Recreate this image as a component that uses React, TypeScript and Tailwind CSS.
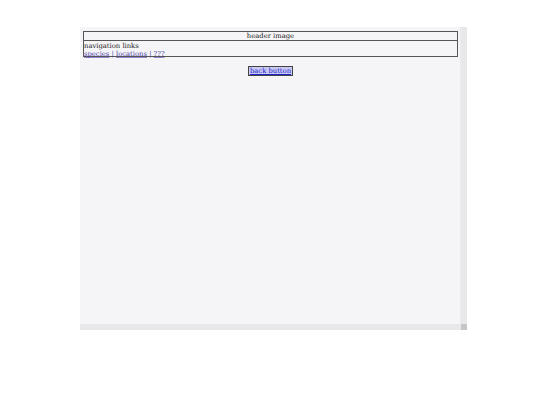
export default function App() {
  return (
    <div className="h-[405px] w-[540px] overflow-hidden bg-white pl-[80px] pt-[27px] font-['DejaVu_Serif',serif]">
      <div className="flex h-[303px] w-[387px] flex-col">
        <div className="flex min-h-0 flex-1">
          <div className="flex-1 bg-[#f5f4f6] px-[3px] pt-[4px] text-[6.8px] leading-[8px] text-[#1a1a1a]">
            <div className="flex h-[10px] items-center justify-center border border-[#555]">header image</div>
            <div className="-mt-px h-[17px] border border-[#555] pt-[1px]">
              <div>navigation links</div>
              <div className="text-[#4a3fa8]">
                <a className="underline decoration-[#8f88cc]">species</a> | <a className="underline decoration-[#8f88cc]">locations</a> | <a className="underline decoration-[#8f88cc]">???</a>
              </div>
            </div>
            <div className="mt-[9px] flex justify-center">
              <a className="border border-[#444] bg-[#c9c9f4] px-px text-[#2020c8] underline">back button</a>
            </div>
          </div>
          <div className="w-[6px] bg-[#e8e7ea] shadow-[-1px_0_1px_rgba(0,0,0,0.04)]" />
        </div>
        <div className="flex h-[6px]">
          <div className="flex-1 bg-[#e8e7ea]" />
          <div className="w-[6px] bg-[#c6c6c8]" />
        </div>
      </div>
    </div>
  );
}
